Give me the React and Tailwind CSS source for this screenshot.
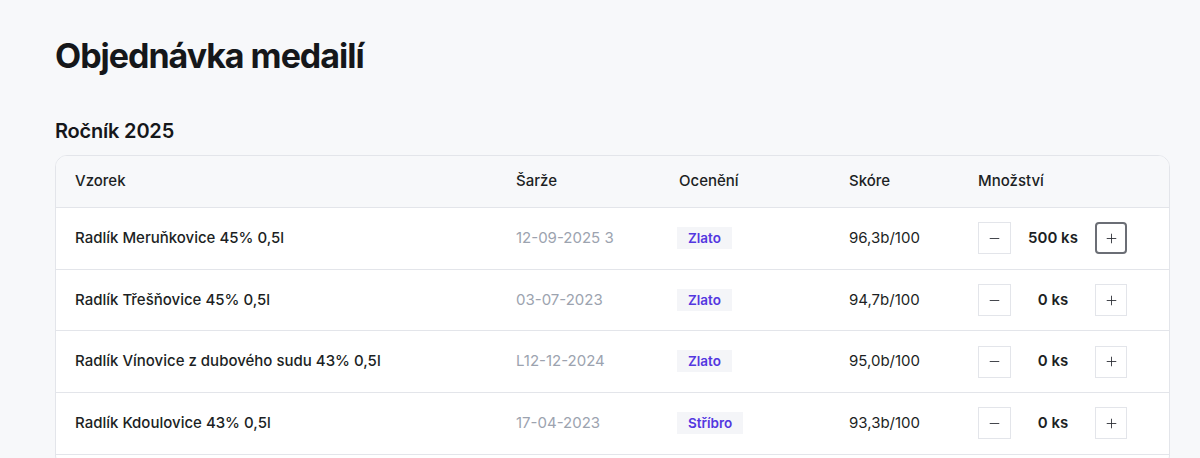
import React, { useState } from 'react';
import { Minus, Plus } from 'lucide-react';

const SAMPLES = [
  { id: 1, name: 'Radlík Meruňkovice 45% 0,5l', batch: '12-09-2025 3', award: 'Zlato', score: '96,3b/100', qty: 500 },
  { id: 2, name: 'Radlík Třešňovice 45% 0,5l', batch: '03-07-2023', award: 'Zlato', score: '94,7b/100', qty: 0 },
  { id: 3, name: 'Radlík Vínovice z dubového sudu 43% 0,5l', batch: 'L12-12-2024', award: 'Zlato', score: '95,0b/100', qty: 0 },
  { id: 4, name: 'Radlík Kdoulovice 43% 0,5l', batch: '17-04-2023', award: 'Stříbro', score: '93,3b/100', qty: 0 },
];

const COLS = 'grid grid-cols-[441px_163px_170px_129px_1fr] items-center';

export default function App() {
  const [qty, setQty] = useState(() => Object.fromEntries(SAMPLES.map(s => [s.id, s.qty])));

  const change = (id, delta) => {
    setQty(q => ({ ...q, [id]: Math.max(0, q[id] + delta) }));
  };

  return (
    <div className="min-h-screen bg-[#f7f8fa] pl-[55px] pr-[30px] pt-[36px] font-['Inter',sans-serif] text-[#1c1f24]">
      <h1 className="text-[34px] font-bold tracking-[-0.03em] leading-[40px] text-[#15171a]">Objednávka medailí</h1>

      <h2 className="mt-[41px] text-[20px] font-semibold leading-[28px] tracking-[-0.01em] text-[#15171a]">Ročník 2025</h2>

      <div className="mt-[10px] bg-white border border-[#e3e5ea] rounded-xl overflow-hidden pb-3">
        <div className={`${COLS} h-[52px] bg-[#f7f8fa] border-b border-[#e3e5ea] pl-[19px] pr-5 text-[15px] font-medium`}>
          <div>Vzorek</div>
          <div>Šarže</div>
          <div>Ocenění</div>
          <div>Skóre</div>
          <div>Množství</div>
        </div>

        {SAMPLES.map((s, i) => (
          <div key={s.id} className={`${COLS} h-[61.7px] pl-[19px] pr-5 text-[15px] border-b border-[#e3e5ea]`}>
            <div className="font-medium">{s.name}</div>
            <div className="text-[#9ca3af]">{s.batch}</div>
            <div>
              <span className="inline-block -ml-[2px] px-[11px] py-[1px] bg-[#f4f5f8] text-[#5337e0] text-[13.5px] font-semibold leading-[20px]">
                {s.award}
              </span>
            </div>
            <div>{s.score}</div>
            <div className="flex items-center">
              <button
                onClick={() => change(s.id, -1)}
                className="w-[33px] h-[32px] flex items-center justify-center border border-[#e3e5ea] bg-white text-[#2a2d33]"
              >
                <Minus size={15} strokeWidth={1.4} />
              </button>
              <div className="w-[84px] text-center font-semibold">{qty[s.id]} ks</div>
              <button
                onClick={() => change(s.id, 1)}
                className={`w-[32px] h-[32px] flex items-center justify-center bg-white text-[#2a2d33] ${i === 0 ? 'border-2 border-[#6b6e75] rounded-[4px]' : 'border border-[#e3e5ea]'}`}
              >
                <Plus size={15} strokeWidth={1.4} />
              </button>
            </div>
          </div>
        ))}
      </div>
    </div>
  );
}
